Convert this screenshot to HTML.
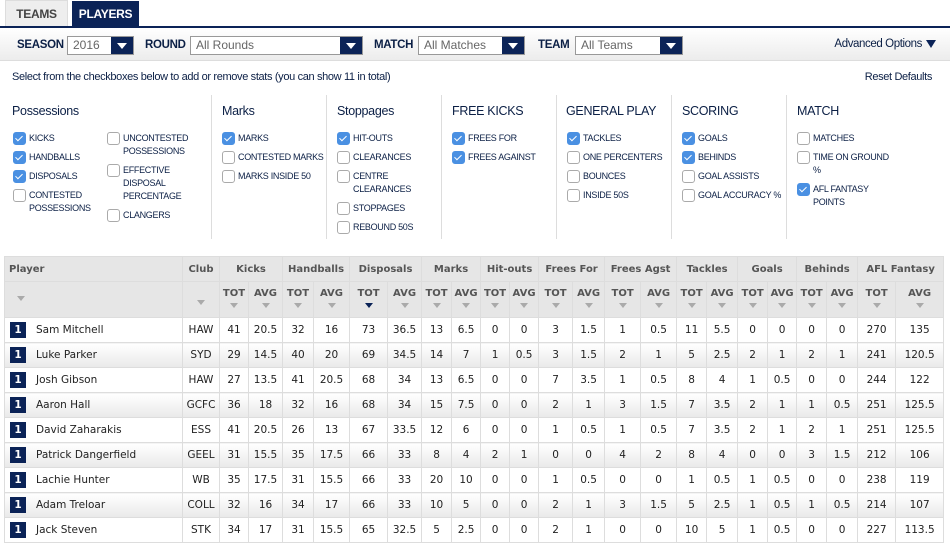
<!DOCTYPE html>
<html><head><meta charset="utf-8"><style>
*{margin:0;padding:0;box-sizing:border-box}
body{width:950px;height:543px;overflow:hidden;background:#fff;font-family:"Liberation Sans",sans-serif;color:#0b1f45;position:relative}
.a{position:absolute}
.tab{position:absolute;top:0;height:26px;font-size:12px;font-weight:bold;line-height:27px;text-align:center;letter-spacing:-0.3px}
.bar{position:absolute;left:0;top:28px;width:950px;height:33px;background:linear-gradient(#fff,#ececec);border-bottom:1px solid #ddd}
.lbl{position:absolute;top:39px;font-size:11.5px;font-weight:bold;color:#0b1f45;letter-spacing:-0.3px}
.sel{position:absolute;top:36px;height:19px;border:1px solid #999;background:#fff;font-size:12px;color:#666;line-height:17px;padding-left:5px}
.sel b{position:absolute;right:0;top:0;width:22px;height:17px;background:#0b2357}
.sel b:after{content:"";position:absolute;left:6px;top:6px;border-left:5px solid transparent;border-right:5px solid transparent;border-top:6px solid #fff}
.gh{position:absolute;top:104px;font-size:12.5px;color:#0b1f45;letter-spacing:-0.3px}
.div{position:absolute;top:95px;width:1px;height:144px;background:#ddd}
.cb{position:absolute;font-size:9px;line-height:13px;color:#0b1f45;letter-spacing:-0.3px;padding-left:16px;white-space:nowrap}
.cb:before{content:"";position:absolute;left:0;top:0;width:11px;height:11px;border:1px solid #aaa;border-radius:3px;background:#fff}
.cb.on:before{background:#4a90e2;border-color:#4a90e2}
.cb.on:after{content:"";position:absolute;left:4px;top:2px;width:3px;height:6px;border:solid #fff;border-width:0 1.5px 1.5px 0;transform:rotate(45deg)}
table{position:absolute;left:4px;top:256px;width:939px;border-collapse:collapse;font-family:"DejaVu Sans",sans-serif;font-size:10.5px;color:#222;table-layout:fixed}
td,th{border:1px solid #ddd;text-align:center;padding:0}
thead th{background:#e6e6e6;color:#555;font-weight:bold;font-size:10px}
tr.h1 th{height:25px}
tr.h2 th{height:36px;vertical-align:top;padding-top:6px}
.ar{display:block;margin:4px auto 0;width:0;height:0;border-left:4px solid transparent;border-right:4px solid transparent;border-top:5px solid #aaa}
.ar.d{border-top-color:#0b2357}
tbody td{height:25px}
tbody tr:nth-child(even) td{background:linear-gradient(#fff,#e9e9e9)}
td.p{text-align:left;padding-left:5px}
.rk{display:inline-block;width:16px;height:16px;background:#0b2357;color:#fff;font-weight:bold;font-size:10.5px;line-height:16px;text-align:center;margin-right:10px;vertical-align:middle}
</style></head><body>
<div class="tab" style="left:5px;width:63px;background:#eee;color:#444;border:1px solid #ddd;border-bottom:none">TEAMS</div>
<div class="tab" style="left:72px;width:67px;background:#0b2357;color:#fff;top:1px;height:26px">PLAYERS</div>
<div class="a" style="left:0;top:26px;width:950px;height:2px;background:#0b2357"></div>
<div class="bar"></div>
<div class="lbl" style="left:17px">SEASON</div>
<div class="sel" style="left:67px;width:67px">2016<b></b></div>
<div class="lbl" style="left:145px">ROUND</div>
<div class="sel" style="left:190px;width:173px">All Rounds<b></b></div>
<div class="lbl" style="left:374px">MATCH</div>
<div class="sel" style="left:418px;width:107px">All Matches<b></b></div>
<div class="lbl" style="left:538px">TEAM</div>
<div class="sel" style="left:575px;width:108px">All Teams<b></b></div>
<div class="a" style="right:28px;top:38px;font-size:11.5px;letter-spacing:-0.4px">Advanced Options</div>
<div class="a" style="left:926px;top:40px;border-left:5.5px solid transparent;border-right:5.5px solid transparent;border-top:8px solid #0b2357"></div>
<div class="a" style="left:12px;top:71px;font-size:11px;letter-spacing:-0.35px">Select from the checkboxes below to add or remove stats (you can show 11 in total)</div>
<div class="a" style="right:18px;top:71px;font-size:11px;letter-spacing:-0.35px">Reset Defaults</div>

<div class="gh" style="left:12px">Possessions</div>
<div class="cb on" style="left:13px;top:132px">KICKS</div>
<div class="cb on" style="left:13px;top:151px">HANDBALLS</div>
<div class="cb on" style="left:13px;top:170px">DISPOSALS</div>
<div class="cb" style="left:13px;top:189px">CONTESTED<br>POSSESSIONS</div>
<div class="cb" style="left:107px;top:132px">UNCONTESTED<br>POSSESSIONS</div>
<div class="cb" style="left:107px;top:164px">EFFECTIVE<br>DISPOSAL<br>PERCENTAGE</div>
<div class="cb" style="left:107px;top:209px">CLANGERS</div>
<div class="div" style="left:211px"></div>
<div class="gh" style="left:222px">Marks</div>
<div class="cb on" style="left:222px;top:132px">MARKS</div>
<div class="cb" style="left:222px;top:151px">CONTESTED MARKS</div>
<div class="cb" style="left:222px;top:170px">MARKS INSIDE 50</div>
<div class="div" style="left:326px"></div>
<div class="gh" style="left:337px">Stoppages</div>
<div class="cb on" style="left:337px;top:132px">HIT-OUTS</div>
<div class="cb" style="left:337px;top:151px">CLEARANCES</div>
<div class="cb" style="left:337px;top:170px">CENTRE<br>CLEARANCES</div>
<div class="cb" style="left:337px;top:202px">STOPPAGES</div>
<div class="cb" style="left:337px;top:221px">REBOUND 50S</div>
<div class="div" style="left:441px"></div>
<div class="gh" style="left:452px">FREE KICKS</div>
<div class="cb on" style="left:452px;top:132px">FREES FOR</div>
<div class="cb on" style="left:452px;top:151px">FREES AGAINST</div>
<div class="div" style="left:556px"></div>
<div class="gh" style="left:566px">GENERAL PLAY</div>
<div class="cb on" style="left:567px;top:132px">TACKLES</div>
<div class="cb" style="left:567px;top:151px">ONE PERCENTERS</div>
<div class="cb" style="left:567px;top:170px">BOUNCES</div>
<div class="cb" style="left:567px;top:189px">INSIDE 50S</div>
<div class="div" style="left:671px"></div>
<div class="gh" style="left:682px">SCORING</div>
<div class="cb on" style="left:682px;top:132px">GOALS</div>
<div class="cb on" style="left:682px;top:151px">BEHINDS</div>
<div class="cb" style="left:682px;top:170px">GOAL ASSISTS</div>
<div class="cb" style="left:682px;top:189px">GOAL ACCURACY %</div>
<div class="div" style="left:786px"></div>
<div class="gh" style="left:797px">MATCH</div>
<div class="cb" style="left:797px;top:132px">MATCHES</div>
<div class="cb" style="left:797px;top:151px">TIME ON GROUND<br>%</div>
<div class="cb on" style="left:797px;top:183px">AFL FANTASY<br>POINTS</div>

<table>
<colgroup><col style="width:178px"><col style="width:37px"><col style="width:29px"><col style="width:34px"><col style="width:31px"><col style="width:36px"><col style="width:38px"><col style="width:34px"><col style="width:30px"><col style="width:29px"><col style="width:29px"><col style="width:29px"><col style="width:34px"><col style="width:32px"><col style="width:36px"><col style="width:36px"><col style="width:30px"><col style="width:31px"><col style="width:30px"><col style="width:29px"><col style="width:30px"><col style="width:31px"><col style="width:38px"><col style="width:48px"></colgroup>
<thead>
<tr class="h1"><th style="text-align:left;padding-left:4px">Player</th><th>Club</th><th colspan="2">Kicks</th><th colspan="2">Handballs</th><th colspan="2">Disposals</th><th colspan="2">Marks</th><th colspan="2">Hit-outs</th><th colspan="2">Frees For</th><th colspan="2">Frees Agst</th><th colspan="2">Tackles</th><th colspan="2">Goals</th><th colspan="2">Behinds</th><th colspan="2">AFL Fantasy</th></tr>
<tr class="h2"><th style="text-align:left;padding-left:12px;padding-top:14px"><i class="ar" style="margin:0"></i></th><th style="padding-top:14px"><i class="ar"></i></th>
<th>TOT<i class="ar"></i></th><th>AVG<i class="ar"></i></th><th>TOT<i class="ar"></i></th><th>AVG<i class="ar"></i></th><th>TOT<i class="ar d"></i></th><th>AVG<i class="ar"></i></th><th>TOT<i class="ar"></i></th><th>AVG<i class="ar"></i></th><th>TOT<i class="ar"></i></th><th>AVG<i class="ar"></i></th><th>TOT<i class="ar"></i></th><th>AVG<i class="ar"></i></th><th>TOT<i class="ar"></i></th><th>AVG<i class="ar"></i></th><th>TOT<i class="ar"></i></th><th>AVG<i class="ar"></i></th><th>TOT<i class="ar"></i></th><th>AVG<i class="ar"></i></th><th>TOT<i class="ar"></i></th><th>AVG<i class="ar"></i></th><th>TOT<i class="ar"></i></th><th>AVG<i class="ar"></i></th></tr>
</thead>
<tbody>
<tr><td class="p"><span class="rk">1</span>Sam Mitchell</td><td>HAW</td><td>41</td><td>20.5</td><td>32</td><td>16</td><td>73</td><td>36.5</td><td>13</td><td>6.5</td><td>0</td><td>0</td><td>3</td><td>1.5</td><td>1</td><td>0.5</td><td>11</td><td>5.5</td><td>0</td><td>0</td><td>0</td><td>0</td><td>270</td><td>135</td></tr>
<tr><td class="p"><span class="rk">1</span>Luke Parker</td><td>SYD</td><td>29</td><td>14.5</td><td>40</td><td>20</td><td>69</td><td>34.5</td><td>14</td><td>7</td><td>1</td><td>0.5</td><td>3</td><td>1.5</td><td>2</td><td>1</td><td>5</td><td>2.5</td><td>2</td><td>1</td><td>2</td><td>1</td><td>241</td><td>120.5</td></tr>
<tr><td class="p"><span class="rk">1</span>Josh Gibson</td><td>HAW</td><td>27</td><td>13.5</td><td>41</td><td>20.5</td><td>68</td><td>34</td><td>13</td><td>6.5</td><td>0</td><td>0</td><td>7</td><td>3.5</td><td>1</td><td>0.5</td><td>8</td><td>4</td><td>1</td><td>0.5</td><td>0</td><td>0</td><td>244</td><td>122</td></tr>
<tr><td class="p"><span class="rk">1</span>Aaron Hall</td><td>GCFC</td><td>36</td><td>18</td><td>32</td><td>16</td><td>68</td><td>34</td><td>15</td><td>7.5</td><td>0</td><td>0</td><td>2</td><td>1</td><td>3</td><td>1.5</td><td>7</td><td>3.5</td><td>2</td><td>1</td><td>1</td><td>0.5</td><td>251</td><td>125.5</td></tr>
<tr><td class="p"><span class="rk">1</span>David Zaharakis</td><td>ESS</td><td>41</td><td>20.5</td><td>26</td><td>13</td><td>67</td><td>33.5</td><td>12</td><td>6</td><td>0</td><td>0</td><td>1</td><td>0.5</td><td>1</td><td>0.5</td><td>7</td><td>3.5</td><td>2</td><td>1</td><td>2</td><td>1</td><td>251</td><td>125.5</td></tr>
<tr><td class="p"><span class="rk">1</span>Patrick Dangerfield</td><td>GEEL</td><td>31</td><td>15.5</td><td>35</td><td>17.5</td><td>66</td><td>33</td><td>8</td><td>4</td><td>2</td><td>1</td><td>0</td><td>0</td><td>4</td><td>2</td><td>8</td><td>4</td><td>0</td><td>0</td><td>3</td><td>1.5</td><td>212</td><td>106</td></tr>
<tr><td class="p"><span class="rk">1</span>Lachie Hunter</td><td>WB</td><td>35</td><td>17.5</td><td>31</td><td>15.5</td><td>66</td><td>33</td><td>20</td><td>10</td><td>0</td><td>0</td><td>1</td><td>0.5</td><td>0</td><td>0</td><td>1</td><td>0.5</td><td>1</td><td>0.5</td><td>0</td><td>0</td><td>238</td><td>119</td></tr>
<tr><td class="p"><span class="rk">1</span>Adam Treloar</td><td>COLL</td><td>32</td><td>16</td><td>34</td><td>17</td><td>66</td><td>33</td><td>10</td><td>5</td><td>0</td><td>0</td><td>2</td><td>1</td><td>3</td><td>1.5</td><td>5</td><td>2.5</td><td>1</td><td>0.5</td><td>1</td><td>0.5</td><td>214</td><td>107</td></tr>
<tr><td class="p"><span class="rk">1</span>Jack Steven</td><td>STK</td><td>34</td><td>17</td><td>31</td><td>15.5</td><td>65</td><td>32.5</td><td>5</td><td>2.5</td><td>0</td><td>0</td><td>2</td><td>1</td><td>0</td><td>0</td><td>10</td><td>5</td><td>1</td><td>0.5</td><td>0</td><td>0</td><td>227</td><td>113.5</td></tr>
</tbody></table>
</body></html>
